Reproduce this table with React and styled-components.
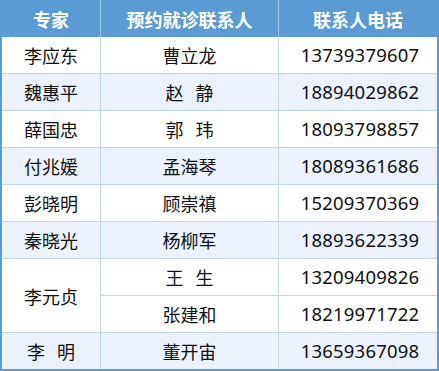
import React from "react";
import styled, { createGlobalStyle } from "styled-components";

const GlobalStyle = createGlobalStyle`
  html, body { margin: 0; padding: 0; background: #ffffff; }
  body { font-family: "Noto Sans CJK SC", "Noto Sans", sans-serif; }
`;

const Table = styled.table`
  width: 439px;
  table-layout: fixed;
  border-collapse: separate;
  border-spacing: 0;
  border-left: 2px solid #5b9bd5;
  border-right: 2px solid #5b9bd5;
  border-bottom: 2px solid #5b9bd5;
  font-size: 18px;
  color: #111111;
`;

const HeadCell = styled.th`
  box-sizing: border-box;
  height: 37px;
  padding: 0;
  background: #5b9bd5;
  color: #ffffff;
  font-weight: bold;
  font-size: 18px;
  text-align: center;
  vertical-align: middle;
  border-right: ${(p) => (p.$last ? "none" : "1px solid #9dc3e6")};
`;

const Cell = styled.td`
  box-sizing: content-box;
  height: 36px;
  padding: 0;
  text-align: center;
  vertical-align: middle;
  line-height: 1;
  background: ${(p) => (p.$shade ? "#ebf2fb" : "#ffffff")};
  border-right: ${(p) => (p.$last ? "none" : "1px solid #bdd7ee")};
  border-bottom: ${(p) => (p.$end ? "none" : "1px solid #bdd7ee")};
`;

const Phone = styled.span`
  font-family: "Noto Sans", "Open Sans", sans-serif;
  font-size: 18.5px;
  letter-spacing: 0.2px;
  padding-left: 4px;
`;

const Gap = styled.span`
  display: inline-block;
  width: 12px;
`;

const Name = ({ text }) => {
  if (text.length === 2) {
    return (
      <span>
        {text[0]}
        <Gap />
        {text[1]}
      </span>
    );
  }
  return <span>{text}</span>;
};

const rows = [
  { expert: "李应东", contact: "曹立龙", phone: "13739379607", shade: false },
  { expert: "魏惠平", contact: "赵静", phone: "18894029862", shade: true },
  { expert: "薛国忠", contact: "郭玮", phone: "18093798857", shade: false },
  { expert: "付兆媛", contact: "孟海琴", phone: "18089361686", shade: true },
  { expert: "彭晓明", contact: "顾崇禛", phone: "15209370369", shade: false },
  { expert: "秦晓光", contact: "杨柳军", phone: "18893622339", shade: true },
  { expert: "李元贞", contact: "王生", phone: "13209409826", shade: false, span: 2 },
  { expert: null, contact: "张建和", phone: "18219971722", shade: false },
  { expert: "李明", contact: "董开宙", phone: "13659367098", shade: true, end: true },
];

export default function App() {
  return (
    <>
      <GlobalStyle />
      <Table>
        <colgroup>
          <col style={{ width: 99 }} />
          <col style={{ width: 178 }} />
          <col style={{ width: 158 }} />
        </colgroup>
        <thead>
          <tr>
            <HeadCell>专家</HeadCell>
            <HeadCell>预约就诊联系人</HeadCell>
            <HeadCell $last>联系人电话</HeadCell>
          </tr>
        </thead>
        <tbody>
          {rows.map((r) => (
            <tr key={r.phone}>
              {r.expert && (
                <Cell
                  rowSpan={r.span || 1}
                  $shade={r.shade}
                  $end={r.end}
                  style={r.span ? { height: "auto" } : undefined}
                >
                  <Name text={r.expert} />
                </Cell>
              )}
              <Cell $shade={r.shade} $end={r.end}>
                <Name text={r.contact} />
              </Cell>
              <Cell $shade={r.shade} $end={r.end} $last>
                <Phone>{r.phone}</Phone>
              </Cell>
            </tr>
          ))}
        </tbody>
      </Table>
    </>
  );
}
